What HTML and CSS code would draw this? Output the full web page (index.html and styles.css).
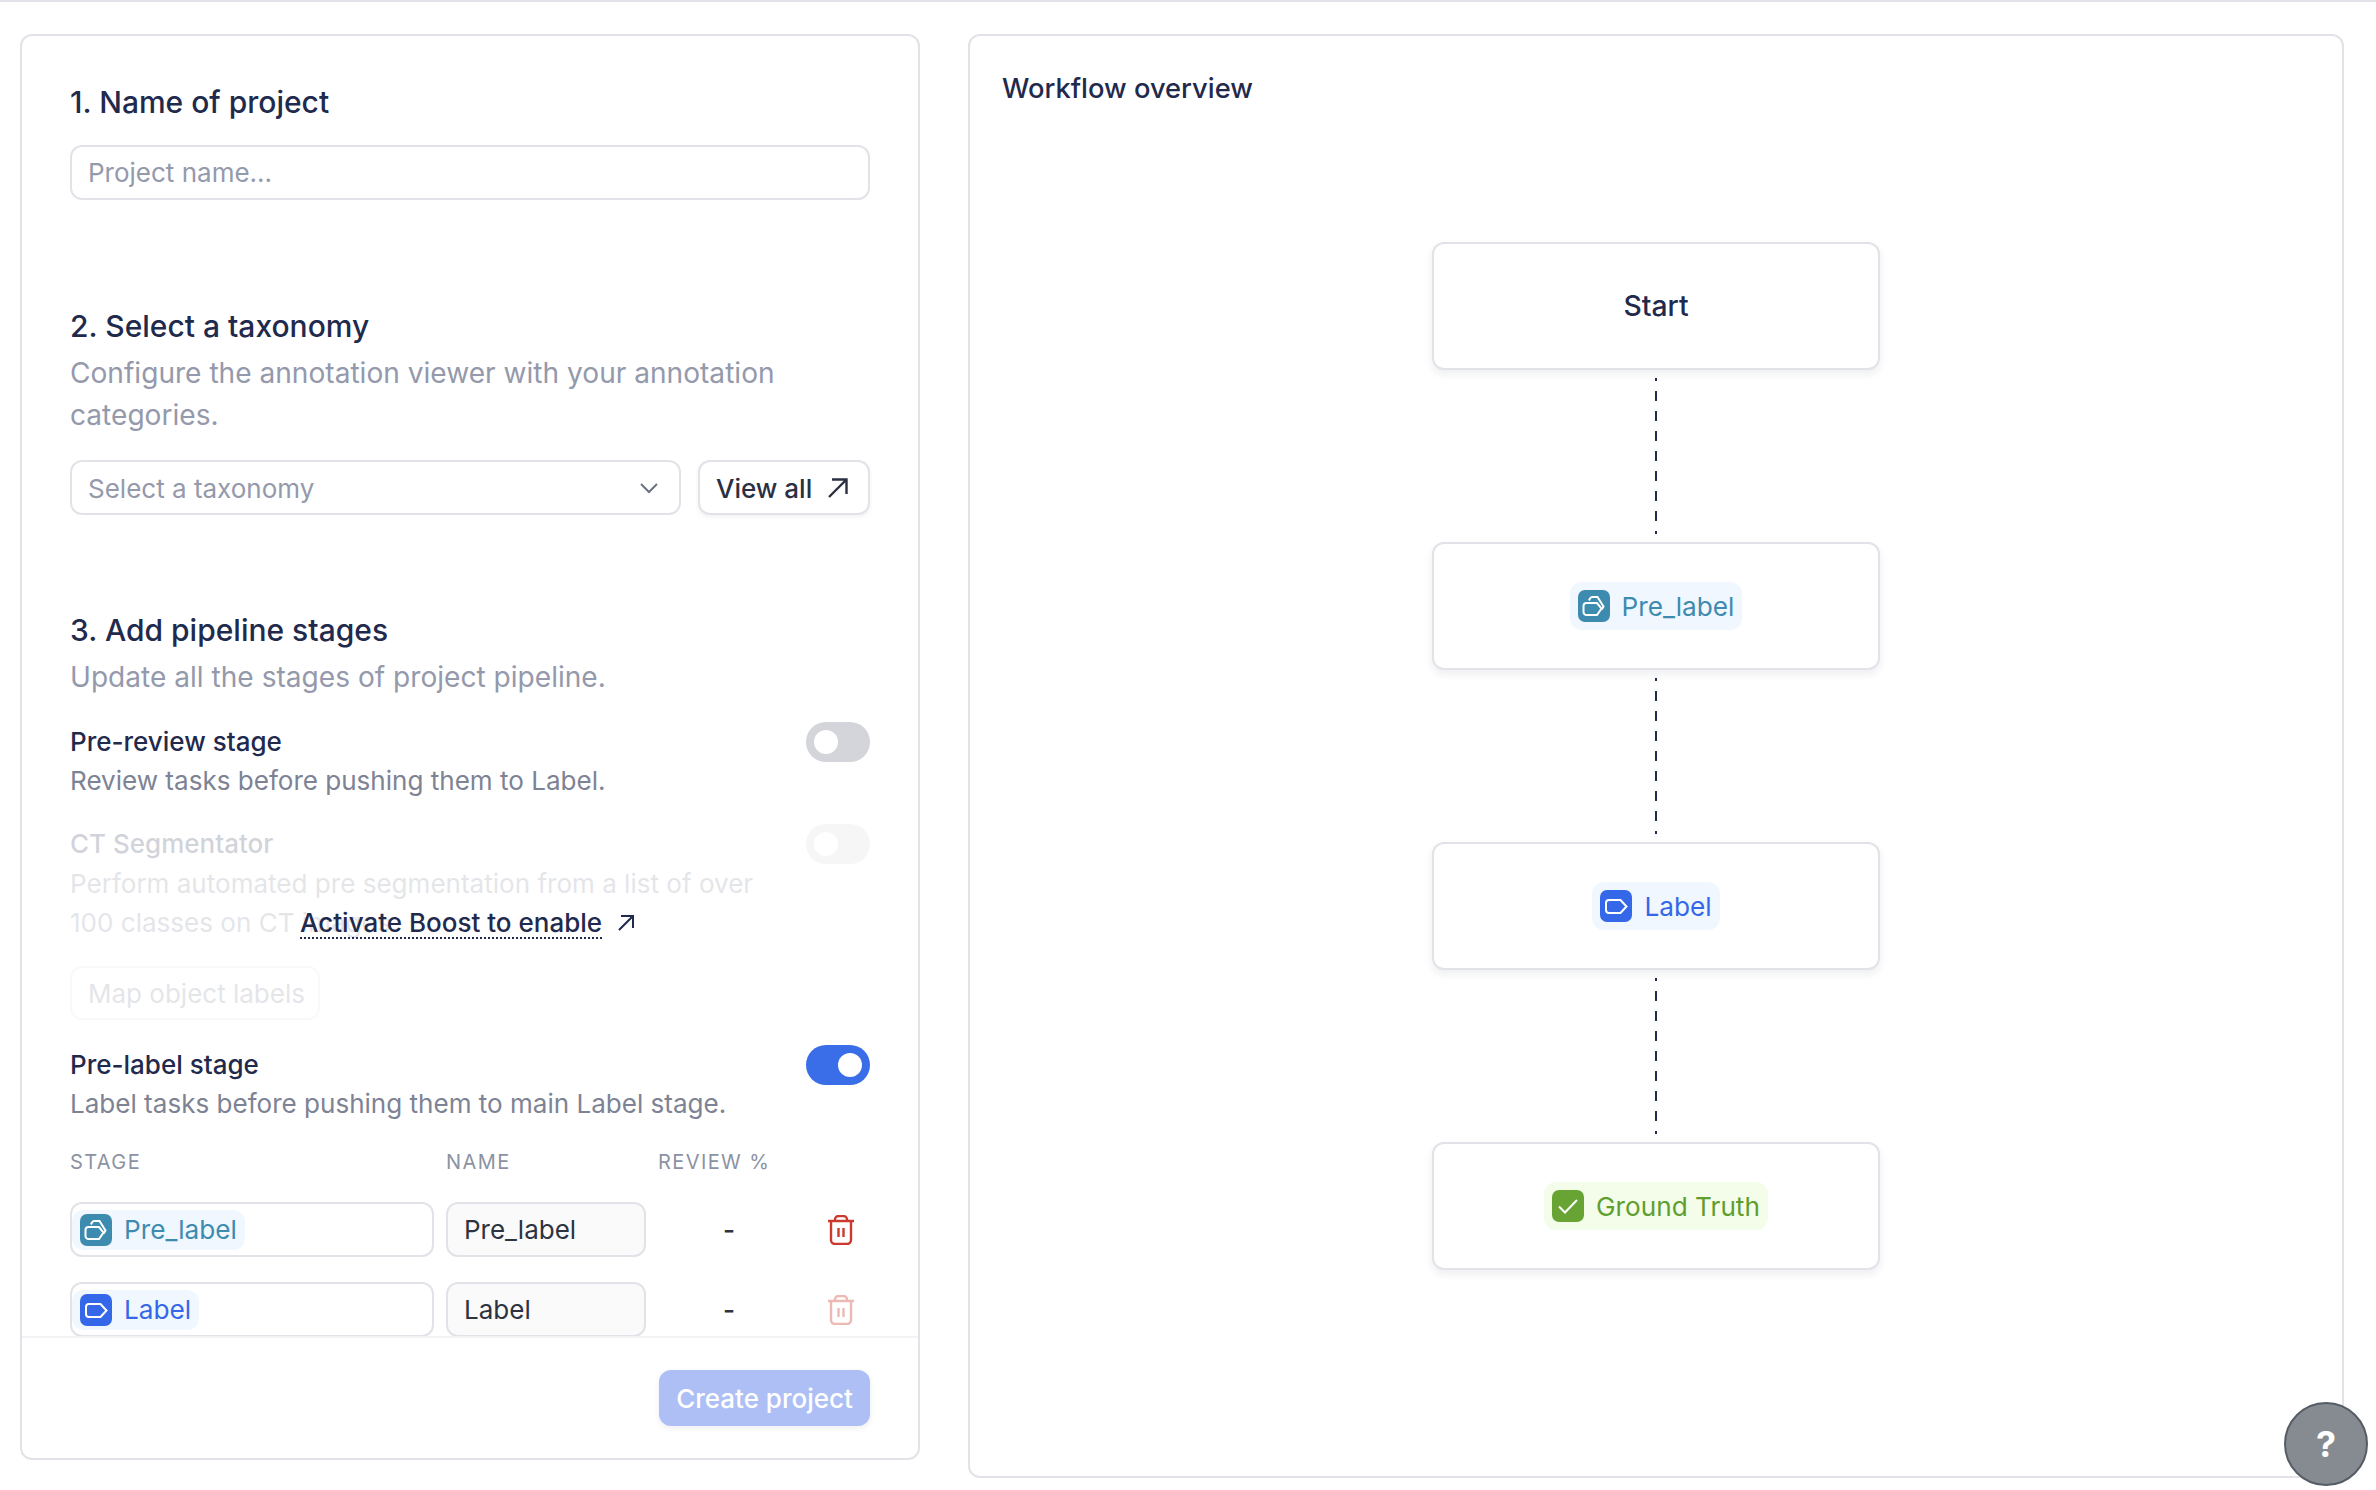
FILE: index.html
```html
<!DOCTYPE html>
<html lang="en">
<head>
<meta charset="utf-8">
<title>New project</title>
<link rel="stylesheet" href="styles.css">
</head>
<body>
<main class="page">
  <section class="card form-card">
    <div class="scroll">
      <h2 class="heading">1. Name of project</h2>
      <div class="field field-name placeholder">Project name...</div>

      <h2 class="heading sec-2">2. Select a taxonomy</h2>
      <p class="desc">Configure the annotation viewer with your annotation categories.</p>
      <div class="select-row">
        <div class="field select placeholder">Select a taxonomy
          <svg class="chev" viewBox="0 0 20 20" width="20" height="20"><path d="M2 6l8 8 8-8" fill="none" stroke="#6b7280" stroke-width="2"/></svg>
        </div>
        <button class="btn-outline">View all
          <svg viewBox="0 0 22 22" width="22" height="22"><path d="M3 20L20 3M6 2.500h14.500V17" fill="none" stroke="#2a3042" stroke-width="2.400"/></svg>
        </button>
      </div>

      <h2 class="heading sec-3">3. Add pipeline stages</h2>
      <p class="desc">Update all the stages of project pipeline.</p>

      <div class="option opt-prereview">
        <div>
          <div class="opt-title">Pre-review stage</div>
          <div class="opt-desc">Review tasks before pushing them to Label.</div>
        </div>
        <span class="toggle"></span>
      </div>

      <div class="option opt-ct">
        <div class="opt-body faded">
          <div class="opt-title">CT Segmentator</div>
          <div class="opt-desc opt-wrap">Perform automated pre segmentation from a list of over 100 classes on CT images.</div>
        </div>
        <span class="toggle faded"></span>
        <a class="boost">Activate Boost to enable</a>
        <svg class="boost-arrow" viewBox="0 0 18 18" width="18" height="18"><path d="M2 16L16 2M4 2h12v12" fill="none" stroke="#1f2a4d" stroke-width="2"/></svg>
      </div>
      <div class="map-btn faded">Map object labels</div>

      <div class="option opt-prelabel">
        <div>
          <div class="opt-title">Pre-label stage</div>
          <div class="opt-desc">Label tasks before pushing them to main Label stage.</div>
        </div>
        <span class="toggle on"></span>
      </div>

      <div class="stage-grid stage-head">
        <span>STAGE</span><span>NAME</span><span>REVIEW %</span><span></span>
      </div>

      <div class="stage-grid stage-row">
        <div class="stage-cell">
          <span class="badge badge-pre">
            <span class="ico"><svg viewBox="0 0 32 32" width="32" height="32"><path d="M8.500 13h10.500l4.500 5.500-4.500 6.500H8.500a3 3 0 0 1-3-3v-6a3 3 0 0 1 3-3z" fill="none" stroke="#fff" stroke-width="2"/><path d="M11 10.500l.8-1.700a3 3 0 0 1 2.500-1.800h5.200l6 9.500-1.800 3" fill="none" stroke="#fff" stroke-width="2"/></svg></span>
            Pre_label
          </span>
        </div>
        <div class="name-cell">Pre_label</div>
        <div class="dash">-</div>
        <svg class="trash" viewBox="0 0 26 30" width="26" height="30"><path d="M0 6h26M7 6V4.500A3.500 3.500 0 0 1 10.500 1h5A3.500 3.500 0 0 1 19 4.500V6M3 6v19a4 4 0 0 0 4 4h12a4 4 0 0 0 4-4V6M10.500 13v9M15.500 13v9" fill="none" stroke="#cb3a2e" stroke-width="2.400"/></svg>
      </div>

      <div class="stage-grid stage-row">
        <div class="stage-cell">
          <span class="badge badge-label">
            <span class="ico"><svg viewBox="0 0 32 32" width="32" height="32"><path d="M9 10h11.500l6 6.500-6 6.500H9a3 3 0 0 1-3-3v-7a3 3 0 0 1 3-3z" fill="none" stroke="#fff" stroke-width="2"/></svg></span>
            Label
          </span>
        </div>
        <div class="name-cell">Label</div>
        <div class="dash">-</div>
        <svg class="trash trash-off" viewBox="0 0 26 30" width="26" height="30"><path d="M0 6h26M7 6V4.500A3.500 3.500 0 0 1 10.500 1h5A3.500 3.500 0 0 1 19 4.500V6M3 6v19a4 4 0 0 0 4 4h12a4 4 0 0 0 4-4V6M10.500 13v9M15.500 13v9" fill="none" stroke="#cb3a2e" stroke-width="2.400"/></svg>
      </div>
    </div>
    <footer class="form-foot">
      <button class="btn-primary">Create project</button>
    </footer>
  </section>

  <section class="card flow-card">
    <h2 class="flow-title">Workflow overview</h2>
    <div class="flow">
      <div class="node node-start">Start</div>
      <svg class="link" viewBox="0 0 2 172" width="2" height="172"><line x1="1" y1="8" x2="1" y2="164" stroke="#1f2a4d" stroke-width="2" stroke-dasharray="10 10" stroke-dashoffset="7"/></svg>
      <div class="node">
        <span class="badge badge-pre badge-lg">
          <span class="ico"><svg viewBox="0 0 32 32" width="32" height="32"><path d="M8.500 13h10.500l4.500 5.500-4.500 6.500H8.500a3 3 0 0 1-3-3v-6a3 3 0 0 1 3-3z" fill="none" stroke="#fff" stroke-width="2"/><path d="M11 10.500l.8-1.700a3 3 0 0 1 2.500-1.800h5.200l6 9.500-1.800 3" fill="none" stroke="#fff" stroke-width="2"/></svg></span>
          Pre_label
        </span>
      </div>
      <svg class="link" viewBox="0 0 2 172" width="2" height="172"><line x1="1" y1="8" x2="1" y2="164" stroke="#1f2a4d" stroke-width="2" stroke-dasharray="10 10" stroke-dashoffset="7"/></svg>
      <div class="node">
        <span class="badge badge-label badge-lg">
          <span class="ico"><svg viewBox="0 0 32 32" width="32" height="32"><path d="M9 10h11.500l6 6.500-6 6.500H9a3 3 0 0 1-3-3v-7a3 3 0 0 1 3-3z" fill="none" stroke="#fff" stroke-width="2"/></svg></span>
          Label
        </span>
      </div>
      <svg class="link" viewBox="0 0 2 172" width="2" height="172"><line x1="1" y1="8" x2="1" y2="164" stroke="#1f2a4d" stroke-width="2" stroke-dasharray="10 10" stroke-dashoffset="7"/></svg>
      <div class="node">
        <span class="badge badge-gt badge-lg">
          <span class="ico"><svg viewBox="0 0 32 32" width="32" height="32"><path d="M7 16.500l6 6L25 10" fill="none" stroke="#fff" stroke-width="2"/></svg></span>
          Ground Truth
        </span>
      </div>
    </div>
  </section>
</main>
<button class="help">?</button>
</body>
</html>
```

FILE: styles.css
```css
* { box-sizing: border-box; }
html, body { margin: 0; height: 100%; }
body {
  font-family: Inter, "Liberation Sans", sans-serif;
  background: #fff;
  color: #1f2a4d;
  border-top: 2px solid #e2e2e8;
  overflow: hidden;
}
.page { display: flex; gap: 48px; padding: 32px 0 0 20px; align-items: flex-start; }
.card { border: 2px solid #e2e2e8; border-radius: 12px; background: #fff; }
.form-card { width: 900px; height: 1426px; display: flex; flex-direction: column; }
.flow-card { width: 1376px; height: 1444px; padding: 33px 32px 0; }

.scroll { height: 1300px; padding: 46px 48px 0; overflow: hidden; }
.heading { margin: 0; font-size: 30px; line-height: 40px; font-weight: 500; color: #1f2a4d; }
.sec-2 { margin-top: 106px; }
.sec-3 { margin-top: 95px; }
.desc { margin: 6px 0 0; font-size: 28.100px; line-height: 42px; color: #9499ab; }

.field {
  display: flex; align-items: center; height: 55px; padding: 0 16px;
  border: 2px solid #e2e2e8; border-radius: 12px; font-size: 26px; background: #fff;
}
.placeholder { color: #9499ab; }
.field-name { margin-top: 23px; }
.select-row { display: flex; gap: 17px; margin-top: 24px; }
.select { flex: 1; justify-content: space-between; padding-top: 1px; }
.chev { margin-right: 4px; }
.btn-outline {
  display: flex; align-items: center; gap: 14px; width: 172px; height: 55px; padding: 1px 16px 0;
  border: 2px solid #e2e2e8; border-radius: 12px; background: #fff;
  font: 500 26px Inter, sans-serif; color: #2a3042; box-shadow: 0 2px 4px rgba(30,40,70,.06);
}

.option { position: relative; display: flex; justify-content: space-between; align-items: flex-start; }
.opt-prereview { margin-top: 24px; }
.opt-ct { margin-top: 24px; }
.opt-prelabel { margin-top: 25px; }
.opt-title { font-size: 26px; line-height: 40px; font-weight: 500; color: #1f2a4d; }
.opt-desc { font-size: 26.060px; line-height: 38px; color: #7d8394; }
.opt-wrap { width: 720px; line-height: 39px; }
.faded { opacity: .2; }
.toggle {
  position: relative; flex: none; width: 64px; height: 40px;
  border-radius: 20px; background: #d4d5da;
}
.toggle::after {
  content: ""; position: absolute; left: 8px; top: 8px; width: 24px; height: 24px;
  border-radius: 50%; background: #fff;
}
.toggle.on { background: #3a6ee8; }
.toggle.on::after { left: 32px; }
.boost {
  position: absolute; left: 230px; top: 79px; line-height: 39px; font-size: 26px; font-weight: 500;
  color: #1f2a4d; text-decoration: underline dotted #1f2a4d 2px; text-underline-offset: 5px;
}
.boost-arrow { position: absolute; left: 547px; top: 90px; }
.map-btn {
  display: flex; align-items: center; width: 250px; height: 54px; margin-top: 24px; padding: 0 10px 0 16px;
  border: 2px solid #e2e2e8; border-radius: 12px; font-size: 26px; color: #7d8394; white-space: nowrap;
}

.stage-grid { display: grid; grid-template-columns: 364px 200px 142px 58px; column-gap: 12px; }
.stage-head {
  margin-top: 24px; font-size: 20px; line-height: 30px; letter-spacing: 1.400px; color: #8c92a3; font-weight: 400;
}
.stage-row { align-items: center; height: 55px; margin-top: 25px; }
.stage-cell {
  display: flex; align-items: center; height: 55px; padding: 0;
  border: 2px solid #e2e2e8; border-radius: 12px;
}
.name-cell {
  display: flex; align-items: center; height: 55px; padding: 0 16px;
  border: 2px solid #e2e2e8; border-radius: 12px; background: #fafafa;
  font-size: 26px; color: #2d3340;
}
.dash { text-align: center; font-size: 26px; font-weight: 500; color: #2d3340; }
.trash { justify-self: end; margin-right: 16px; }
.trash-off { opacity: .35; }

.badge {
  display: inline-flex; align-items: center; gap: 12px; height: 40px; padding: 0 8px;
  border-radius: 12px; font-size: 26.200px; white-space: nowrap;
}
.badge-lg { height: 48px; }
.ico { display: flex; width: 32px; height: 32px; border-radius: 7px; }
.badge-pre { background: #f0f7ff; color: #3e8bb0; }
.badge-pre .ico { background: #3e8bb0; }
.badge-label { background: #f0f7ff; color: #3568e8; }
.badge-label .ico { background: #3568e8; }
.badge-gt { background: #f3fde9; color: #5f9e2f; }
.badge-gt .ico { background: #68a434; }

.form-foot {
  flex: 1; display: flex; justify-content: flex-end; align-items: flex-start;
  padding: 32px 48px 0; border-top: 2px solid #f3f3f5;
}
.btn-primary {
  width: 211px; height: 56px; border: 0; border-radius: 12px; background: #adbff5; color: #fff;
  font: 500 26px Inter, sans-serif; box-shadow: 0 2px 6px rgba(30,40,70,.08);
}

.flow-title { margin: 0; font-size: 27.300px; line-height: 40px; font-weight: 500; color: #1f2a4d; }
.flow { display: flex; flex-direction: column; align-items: center; margin-top: 133px; }
.node {
  display: flex; align-items: center; justify-content: center; flex: none;
  width: 448px; height: 128px; border: 2px solid #e2e2e8; border-radius: 12px; background: #fff;
  box-shadow: 0 4px 8px rgba(30,40,70,.08);
}
.node-start { font-size: 28.300px; font-weight: 500; color: #1f2a4d; }
.link { display: block; flex: none; }

.help {
  position: fixed; left: 2284px; top: 1402px; width: 84px; height: 84px; padding: 0;
  border: 2px solid #565c66; border-radius: 50%; background: #868a91; color: #fff;
  font: 700 36px Inter, sans-serif;
}
```
